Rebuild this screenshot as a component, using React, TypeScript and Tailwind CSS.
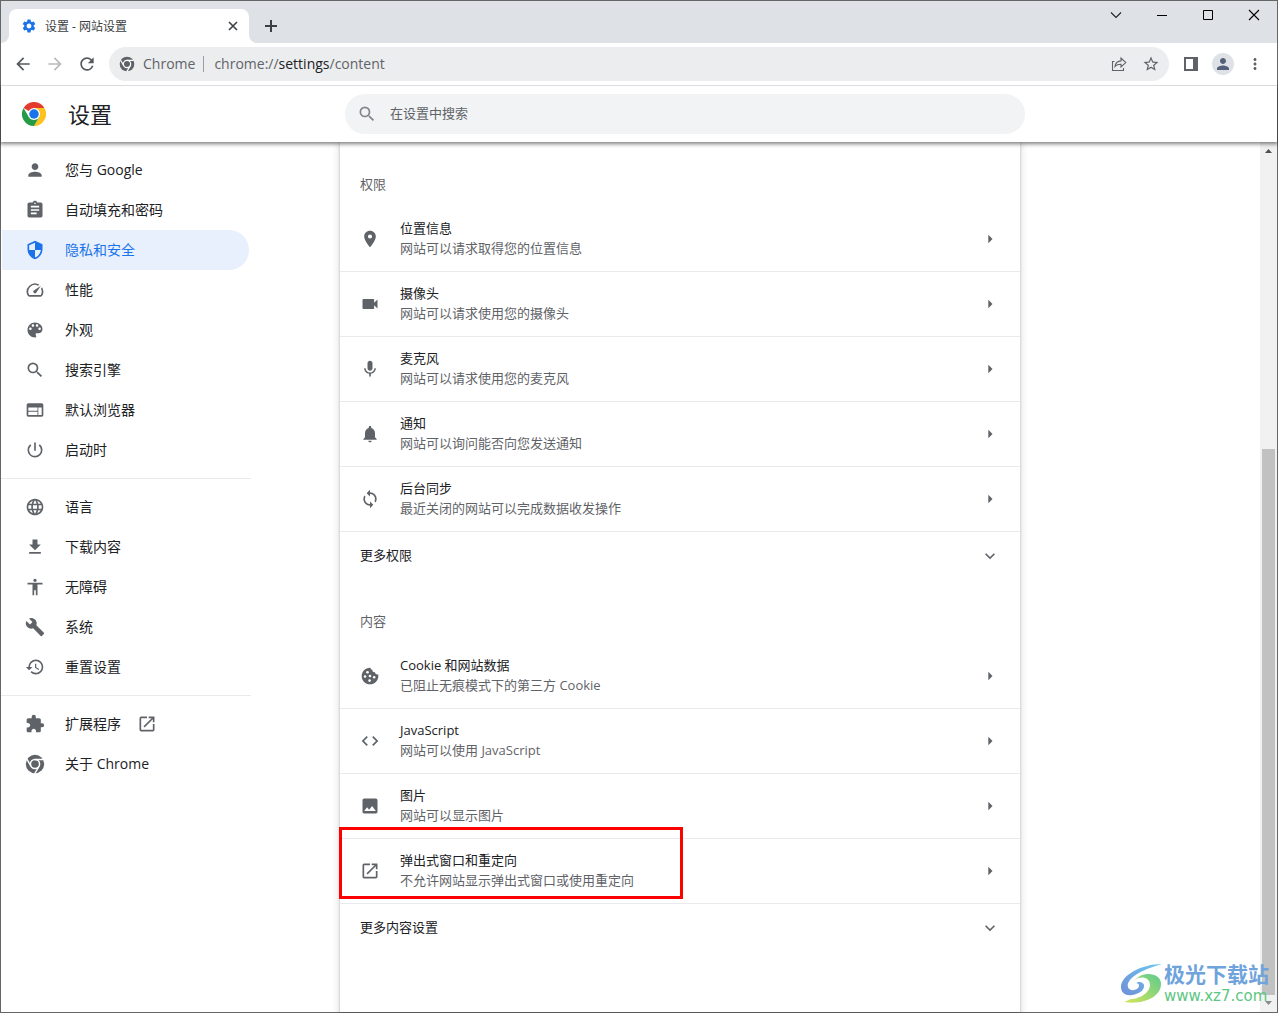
import type { ComponentType, ReactNode } from "react";
import {
  MdAccessibility,
  MdArrowBack,
  MdArrowForward,
  MdArrowRight,
  MdAssignment,
  MdBuild,
  MdCode,
  MdExpandMore,
  MdExtension,
  MdImage,
  MdLanguage,
  MdLocationOn,
  MdMic,
  MdMoreVert,
  MdNotifications,
  MdOpenInNew,
  MdPerson,
  MdPowerSettingsNew,
  MdRefresh,
  MdRestore,
  MdSearch,
  MdSettings,
  MdSpeed,
  MdStarBorder,
  MdSync,
  MdVideocam,
  MdWeb,
} from "react-icons/md";

type Icon = ComponentType<{ className?: string }>;

interface NavItem {
  label: string;
  icon: Icon;
  active?: boolean;
  external?: boolean;
}

interface SettingItem {
  title: string;
  description: string;
  icon: Icon;
  highlighted?: boolean;
}

const ChromeMono: Icon = ({ className }) => (
  <svg viewBox="0 0 24 24" className={className} fill="none" aria-hidden="true">
    <circle cx="12" cy="12" r="11" fill="currentColor" />
    <circle cx="12" cy="12" r="5.500" stroke="#fff" strokeWidth="1.800" />
    <path d="M12 6.500h10M7.200 14.700l-5-8.700M16.800 14.700l-5 8.700" stroke="#fff" strokeWidth="1.800" />
  </svg>
);

const ChromeLogo: Icon = ({ className }) => (
  <svg viewBox="0 0 48 48" className={className} aria-hidden="true">
    <path d="M24 24 3.2 12A24 24 0 0 1 44.8 12Z" fill="#e33b2e" />
    <path d="M24 12h20.8A24 24 0 0 1 24 48l10.4-18Z" fill="#fcc31e" />
    <path d="M13.6 30 3.2 12A24 24 0 0 0 24 48l10.4-18Z" fill="#259b47" />
    <circle cx="24" cy="24" r="12" fill="#fff" />
    <circle cx="24" cy="24" r="9.5" fill="#1a73e8" />
  </svg>
);

const Shield: Icon = ({ className }) => (
  <svg viewBox="0 0 24 24" className={className} fill="currentColor" aria-hidden="true">
    <path d="M12 1 3 5v6c0 5.55 3.84 10.74 9 12 5.16-1.26 9-6.45 9-12V5l-9-4zm0 11h7c-.53 4.12-3.28 7.79-7 8.94V12H5V6.3l7-3.11V12z" />
  </svg>
);

const Palette: Icon = ({ className }) => (
  <svg viewBox="0 0 24 24" className={className} fill="currentColor" aria-hidden="true">
    <path d="M12 3c-4.97 0-9 4.03-9 9s4.03 9 9 9c.83 0 1.5-.67 1.5-1.5 0-.39-.15-.74-.39-1.01-.23-.26-.38-.61-.38-.99 0-.83.67-1.5 1.5-1.5H16c2.76 0 5-2.24 5-5 0-4.42-4.03-8-9-8zm-5.500 9c-.83 0-1.5-.67-1.5-1.5S5.670 9 6.5 9 8 9.670 8 10.5 7.330 12 6.5 12zm3-4C8.670 8 8 7.330 8 6.5S8.670 5 9.5 5s1.5.67 1.5 1.5S10.330 8 9.5 8zm5 0c-.83 0-1.5-.67-1.5-1.5S13.670 5 14.5 5s1.5.67 1.5 1.5S15.330 8 14.5 8zm3 4c-.83 0-1.5-.67-1.5-1.5S16.670 9 17.5 9s1.5.67 1.5 1.5-.67 1.5-1.5 1.5z" />
  </svg>
);

const Cookie: Icon = ({ className }) => (
  <svg viewBox="0 0 24 24" className={className} aria-hidden="true">
    <path
      d="M12.500 2C6.500 1.700 2 6.500 2 12s4.500 10 10 10 10-4.500 10-10c0-.8-.1-1.500-.2-2.200-1.800.8-3.600-.3-3.800-2.300-2 .4-3.500-1-3.100-2.900-1.300-.3-2.200-1.300-2.400-2.600z"
      fill="currentColor"
    />
    <g fill="#fff">
      <circle cx="9" cy="7.500" r="1.600" />
      <circle cx="6" cy="12.500" r="1.500" />
      <circle cx="12" cy="12" r="1.600" />
      <circle cx="17" cy="13.500" r="1.500" />
      <circle cx="11.500" cy="17.500" r="1.600" />
    </g>
  </svg>
);

const Download: Icon = ({ className }) => (
  <svg viewBox="0 0 24 24" className={className} fill="currentColor" aria-hidden="true">
    <path d="M19 9h-4V3H9v6H5l7 7 7-7zM5 18v2h14v-2H5z" />
  </svg>
);

const navGroups: NavItem[][] = [
  [
    { label: "您与 Google", icon: MdPerson },
    { label: "自动填充和密码", icon: MdAssignment },
    { label: "隐私和安全", icon: Shield, active: true },
    { label: "性能", icon: MdSpeed },
    { label: "外观", icon: Palette },
    { label: "搜索引擎", icon: MdSearch },
    { label: "默认浏览器", icon: MdWeb },
    { label: "启动时", icon: MdPowerSettingsNew },
  ],
  [
    { label: "语言", icon: MdLanguage },
    { label: "下载内容", icon: Download },
    { label: "无障碍", icon: MdAccessibility },
    { label: "系统", icon: MdBuild },
    { label: "重置设置", icon: MdRestore },
  ],
  [
    { label: "扩展程序", icon: MdExtension, external: true },
    { label: "关于 Chrome", icon: ChromeMono },
  ],
];

const permissions: SettingItem[] = [
  { title: "位置信息", description: "网站可以请求取得您的位置信息", icon: MdLocationOn },
  { title: "摄像头", description: "网站可以请求使用您的摄像头", icon: MdVideocam },
  { title: "麦克风", description: "网站可以请求使用您的麦克风", icon: MdMic },
  { title: "通知", description: "网站可以询问能否向您发送通知", icon: MdNotifications },
  { title: "后台同步", description: "最近关闭的网站可以完成数据收发操作", icon: MdSync },
];

const contents: SettingItem[] = [
  { title: "Cookie 和网站数据", description: "已阻止无痕模式下的第三方 Cookie", icon: Cookie },
  { title: "JavaScript", description: "网站可以使用 JavaScript", icon: MdCode },
  { title: "图片", description: "网站可以显示图片", icon: MdImage },
  {
    title: "弹出式窗口和重定向",
    description: "不允许网站显示弹出式窗口或使用重定向",
    icon: MdOpenInNew,
    highlighted: true,
  },
];

function IconButton({ label, className = "", children }: { label: string; className?: string; children: ReactNode }) {
  return (
    <button type="button" aria-label={label} className={`flex items-center justify-center shrink-0 ${className}`}>
      {children}
    </button>
  );
}

function TitleBar() {
  return (
    <div className="flex h-[42px] bg-[#dee1e6] text-[#202124]">
      <div className="relative ml-2 mt-2 flex w-60 items-center rounded-t-lg bg-white pl-3 pr-2">
        {/* flared corners at the foot of the tab */}
        <div className="absolute -left-2 bottom-0 size-2 bg-white">
          <div className="size-2 rounded-br-lg bg-[#dee1e6]" />
        </div>
        <div className="absolute -right-2 bottom-0 size-2 bg-white">
          <div className="size-2 rounded-bl-lg bg-[#dee1e6]" />
        </div>
        <MdSettings className="size-4 shrink-0 text-[#1a73e8]" />
        <span className="ml-2 flex-1 pt-px text-xs text-[#3c4043]">设置 - 网站设置</span>
        <IconButton label="关闭标签页" className="size-4">
          <svg viewBox="0 0 16 16" className="size-4" stroke="#3c4043" strokeWidth="1.6">
            <path d="m4 4 8 8M12 4l-8 8" />
          </svg>
        </IconButton>
      </div>
      <IconButton label="新标签页" className="ml-2 mt-[11px] size-7">
        <svg viewBox="0 0 28 28" className="size-7" stroke="#3c4043" strokeWidth="2">
          <path d="M14 8v12M8 14h12" />
        </svg>
      </IconButton>
      <div className="ml-auto flex h-7">
        <IconButton label="搜索标签页" className="w-[46px]">
          <svg viewBox="0 0 12 12" className="size-3" fill="none" stroke="#202124" strokeWidth="1.100">
            <path d="m1 3.500 5 5 5-5" />
          </svg>
        </IconButton>
        <IconButton label="最小化" className="w-[46px]">
          <svg viewBox="0 0 12 12" className="size-3" stroke="#000">
            <path d="M1 6.500h10" />
          </svg>
        </IconButton>
        <IconButton label="最大化" className="w-[46px]">
          <svg viewBox="0 0 12 12" className="size-3" fill="none" stroke="#000">
            <path d="M1.500 1.500h9v9h-9z" />
          </svg>
        </IconButton>
        <IconButton label="关闭" className="w-[46px]">
          <svg viewBox="0 0 12 12" className="size-3" stroke="#000" strokeWidth="1.100">
            <path d="m1 1 10 10M11 1 1 11" />
          </svg>
        </IconButton>
      </div>
    </div>
  );
}

function Toolbar() {
  return (
    <div className="relative z-20 flex h-[43px] items-center border-b border-[#dadce0] bg-white px-1.5 text-[#5f6368]">
      <IconButton label="后退" className="size-8">
        <MdArrowBack className="size-5 text-[#55595d]" />
      </IconButton>
      <IconButton label="前进" className="size-8">
        <MdArrowForward className="size-5 text-[#b9bbbd]" />
      </IconButton>
      <IconButton label="重新加载" className="size-8">
        <MdRefresh className="size-5 text-[#55595d]" />
      </IconButton>
      <div className="ml-1.5 flex h-[34px] flex-1 items-center rounded-full bg-[#ecedef] pl-2.5 pr-0.5">
        <ChromeMono className="size-4 shrink-0" />
        <span className="ml-2 border-r border-[#9aa0a6] pr-2 text-sm leading-4">Chrome</span>
        <div role="textbox" aria-label="地址和搜索栏" tabIndex={0} className="ml-2.5 flex-1 text-sm">
          chrome://<span className="text-[#202124]">settings</span>/content
        </div>
        <IconButton label="分享此页" className="size-8">
          <svg viewBox="0 0 18 18" className="size-[18px]" fill="none" stroke="currentColor" strokeWidth="1.100">
            <path d="M4.500 6.500h-2v9h11v-2.500" />
            <path d="M5 11.500c.4-3.600 2.400-5.400 6-5.600V3l4.800 4.600L11 12V9.300c-2.700-.1-4.600.5-6 2.200z" />
          </svg>
        </IconButton>
        <IconButton label="为此标签页添加书签" className="size-8">
          <MdStarBorder className="size-[18px]" />
        </IconButton>
      </div>
      <IconButton label="侧边栏" className="ml-1.5 size-8">
        <svg viewBox="0 0 14 14" className="size-3.5">
          <path d="M0 0h14v14H0zM2 2v10h7V2z" fill="currentColor" fillRule="evenodd" />
        </svg>
      </IconButton>
      <IconButton label="个人资料" className="size-8">
        <span className="flex size-[22px] items-center justify-center rounded-full bg-[#dee1e6] text-[#54607a]">
          <MdPerson className="size-[18px]" />
        </span>
      </IconButton>
      <IconButton label="更多" className="size-8">
        <MdMoreVert className="size-[18px]" />
      </IconButton>
    </div>
  );
}

function SettingsHeader() {
  return (
    <header className="relative z-10 flex h-14 items-center bg-white shadow-[0_1px_4px_1px_rgba(0,0,0,0.5)]">
      <div className="flex grow basis-[266px] items-center pl-[21px]">
        <ChromeLogo className="size-6" />
        <h1 className="ml-[22px] text-[22px] leading-8">设置</h1>
      </div>
      <label className="flex h-10 w-[680px] items-center rounded-full bg-[#f1f3f4] px-3">
        <MdSearch className="size-5 text-[#80868b]" />
        <input
          type="search"
          aria-label="在设置中搜索"
          placeholder="在设置中搜索"
          className="ml-[13px] flex-1 bg-transparent text-[13px] outline-none placeholder:text-[#5f6368]"
        />
      </label>
      <div className="grow basis-[174px]" />
    </header>
  );
}

function Sidebar() {
  return (
    <nav className="w-[250px] pt-2 text-sm">
      {navGroups.map((group, idx) => (
        <div key={idx} className={idx > 0 ? "mt-2 border-t border-[#e8eaed] pt-2" : ""}>
          {group.map((item) => (
            <a
              key={item.label}
              href="#"
              aria-current={item.active ? "page" : undefined}
              className={`ml-px mr-0.5 flex h-10 items-center rounded-r-full pl-[23px] ${
                item.active ? "bg-[#e8f0fe] text-[#1a73e8]" : "text-[#202124]"
              }`}
            >
              <item.icon className={`size-5 shrink-0 ${item.active ? "" : "text-[#5f6368]"}`} />
              <span className="ml-5">{item.label}</span>
              {item.external && <MdOpenInNew className="ml-4 size-5 text-[#5f6368]" />}
            </a>
          ))}
        </div>
      ))}
    </nav>
  );
}

function SettingRow({ item }: { item: SettingItem }) {
  return (
    <li className="relative border-b border-[#e8eaed]">
      <button type="button" className="flex h-16 w-full items-center px-5 text-left">
        <item.icon className="size-5 shrink-0 text-[#5f6368]" />
        <span className="ml-5 flex flex-1 flex-col pb-0.5 leading-5">
          <span>{item.title}</span>
          <span className="text-[#5f6368]">{item.description}</span>
        </span>
        <MdArrowRight className="size-5 text-[#5f6368]" />
      </button>
      {item.highlighted && (
        <div className="pointer-events-none absolute -left-px -top-3 h-[72px] w-[344px] border-3 border-[#fe0000]" />
      )}
    </li>
  );
}

function Section({ title, items, more }: { title: string; items: SettingItem[]; more: string }) {
  return (
    <section>
      <h2 className="px-5 pb-[13px] pt-[31px] leading-5 text-[#5f6368]">{title}</h2>
      <ul>
        {items.map((item) => (
          <SettingRow key={item.title} item={item} />
        ))}
      </ul>
      <button type="button" aria-expanded="false" className="flex h-12 w-full items-center justify-between px-5">
        <span>{more}</span>
        <MdExpandMore className="size-5 text-[#5f6368]" />
      </button>
    </section>
  );
}

function ScrollBar() {
  return (
    <div className="flex w-[17px] shrink-0 flex-col items-center bg-[#f1f1f1]">
      <svg viewBox="0 0 17 17" className="size-[17px] shrink-0">
        <path d="m5 11 3.500-4 3.500 4z" fill="#505050" />
      </svg>
      <div className="grow-[290]" />
      <div className="w-[13px] grow-[546] bg-[#c1c1c1]" />
      <svg viewBox="0 0 17 17" className="size-[17px] shrink-0">
        <path d="m5 6 3.500 4L12 6z" fill="#8a8a8a" />
      </svg>
    </div>
  );
}

function Watermark() {
  return (
    <div className="absolute bottom-1.5 right-2 z-20 flex items-center">
      <svg viewBox="0 0 44 42" className="h-[42px] w-11">
        <defs>
          <linearGradient id="swirl-top" x1="0" y1="1" x2="1" y2="0">
            <stop offset="0" stopColor="#6f8fd6" />
            <stop offset="1" stopColor="#6cc8f2" />
          </linearGradient>
          <linearGradient id="swirl-bottom" x1="0" y1="1" x2="1" y2="0">
            <stop offset="0" stopColor="#d6e65a" />
            <stop offset="1" stopColor="#5cc98e" />
          </linearGradient>
        </defs>
        <path
          d="M42 1C22 1 1 12 1 24c0 6 5 9 11 8 8-1 13-6 12-10-1-3-5-4-8-2 3 0 4 3 2 5-3 3-9 3-10-1C6 16 20 7 42 1z"
          fill="url(#swirl-top)"
        />
        <path
          d="M14 18c6-6 16-4 16 4 0 8-11 14-19 14l-7 3c20 3 36-5 37-17 1-10-11-13-19-10-4 2-6 4-8 6z"
          fill="url(#swirl-bottom)"
        />
      </svg>
      <div className="flex flex-col">
        <span className="text-[21px] font-bold leading-6 text-[#6fa3dc]">极光下载站</span>
        <span className="font-['DejaVu_Sans',sans-serif] text-[15px] leading-5 text-[#5cc682]">www.xz7.com</span>
      </div>
    </div>
  );
}

export default function App() {
  return (
    <div className="relative flex min-h-screen flex-col border border-[#666] bg-white font-['Open_Sans','Noto_Sans_CJK_SC',sans-serif] text-[13px] text-[#202124]">
      <TitleBar />
      <Toolbar />
      <SettingsHeader />
      <div className="flex flex-1">
        <div className="flex flex-1">
          <div className="grow basis-[266px]">
            <Sidebar />
          </div>
          <main className="w-[680px] bg-white pt-px shadow-[0_1px_2px_0_rgba(60,64,67,0.3),0_2px_6px_2px_rgba(60,64,67,0.15)]">
            <Section title="权限" items={permissions} more="更多权限" />
            <Section title="内容" items={contents} more="更多内容设置" />
          </main>
          <div className="grow basis-[167px]" />
        </div>
        <ScrollBar />
      </div>
      <Watermark />
    </div>
  );
}
